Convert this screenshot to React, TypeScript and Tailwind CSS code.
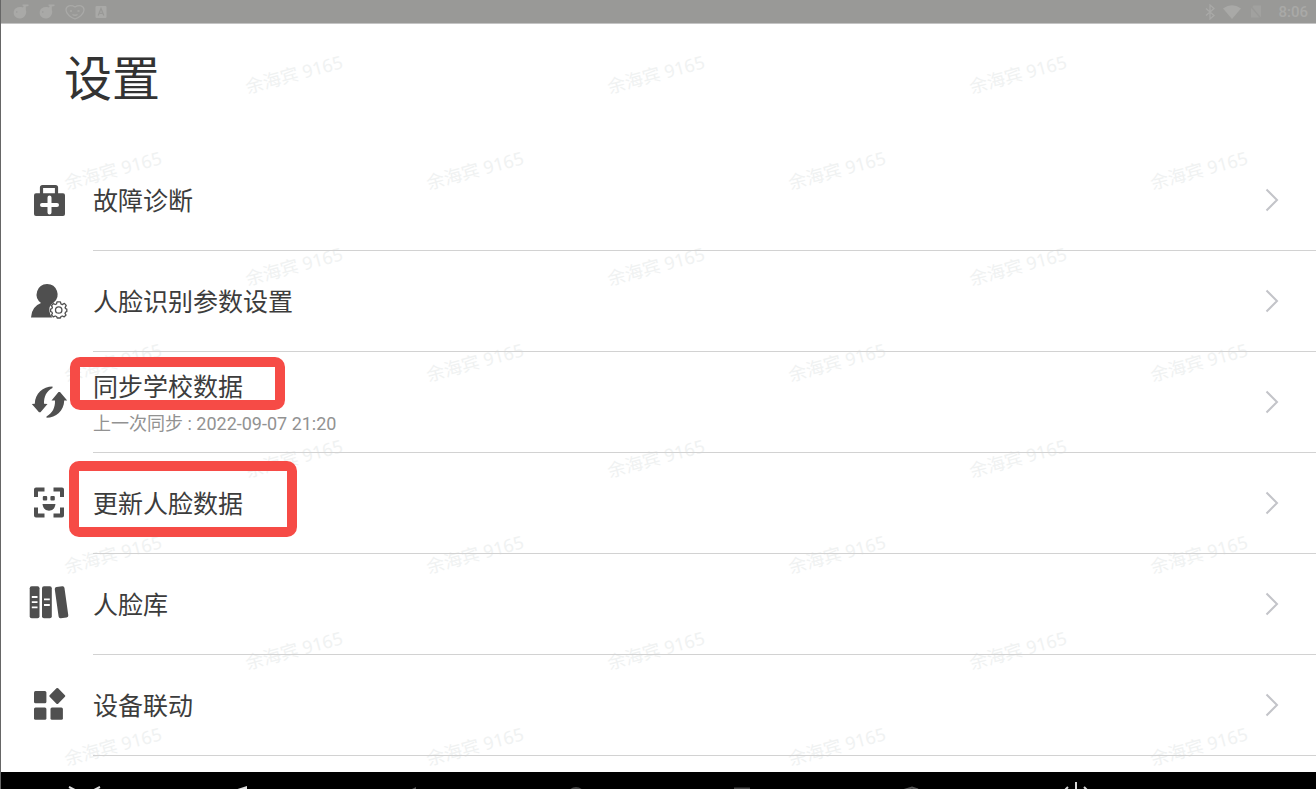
import type { ReactNode } from "react";

type Item = {
    title: string;
    subtitle?: string;
    icon: ReactNode;
    mark?: string;
};

const iconClass = "h-12 w-12 shrink-0 text-[#4f4f4f]";

function DiagnosisIcon() {
    return (
        <svg className={iconClass} viewBox="0 0 48 48" fill="none" aria-hidden="true">
            <path d="M16.5 17V10.5Q16.5 9.5 17.5 9.5H30.5Q31.5 9.5 31.5 10.5V17" stroke="currentColor" strokeWidth="3.2" />
            <rect x="9" y="16.2" width="31" height="22.8" rx="2" fill="currentColor" />
            <path d="M24.5 20.5V35.5M17 28H32" stroke="#fff" strokeWidth="4" strokeLinecap="round" />
        </svg>
    );
}

function FaceParamsIcon() {
    return (
        <svg className={iconClass} viewBox="0 0 48 48" fill="none" aria-hidden="true">
            <path d="M22 6A10.5 10.5 0 0 1 28.5 24.8Q23.5 28 24.5 33.5Q25 37.5 27.5 39.5H6Q6.5 28.5 16 25A10.5 10.5 0 0 1 22 6Z" fill="currentColor" />
            <g stroke="currentColor" strokeWidth="1.3" strokeLinejoin="round" transform="translate(0 -1)">
                <path d="M32 24.9H35.4L36 27L37.3 27.6L39.4 26.3L41.2 28.4L40.1 30.6L40.6 31.6L41.8 32V34.6L40.6 35L40 36.4L41 38L39.2 39.9L37.3 39L36 39.5L35.4 41H32.2L31.6 39.5L30.2 39L28.4 39.9L26.5 38L27.4 36.4L26.9 35L25.6 34.6V32L26.9 31.6L27.4 30.4L26.5 28.6L28.4 26.6L30.2 27.5L31.5 27Z" />
                <circle cx="33.7" cy="33" r="3.2" />
            </g>
        </svg>
    );
}

function SyncIcon() {
    return (
        <svg className={iconClass} viewBox="0 0 48 48" fill="currentColor" aria-hidden="true">
            <path id="sync-arrow" d="M27.5 7.6C18 7.6 10 14.5 9.8 24.8L6.8 25L14 33.3H15.5L22.5 25L19 24.8C18.8 17.5 21.5 12.2 27.5 9Z" />
            <use href="#sync-arrow" transform="rotate(180 24.5 23.2)" />
        </svg>
    );
}

function FaceScanIcon() {
    return (
        <svg className={iconClass} viewBox="0 0 48 48" fill="none" aria-hidden="true">
            <path d="M11 17V9.5H19.5M28.5 9.5H37V17M37 27.5V35.5H28.5M19.5 35.5H11V27.5" stroke="currentColor" strokeWidth="4" strokeLinejoin="round" />
            <rect x="17.8" y="16" width="4.4" height="4.4" rx="1" fill="currentColor" />
            <rect x="25.4" y="16" width="4.4" height="4.4" rx="1" fill="currentColor" />
            <path d="M17.5 24H30.5Q29.5 30.8 24 30.8T17.5 24Z" fill="currentColor" />
        </svg>
    );
}

function LibraryIcon() {
    return (
        <svg className={iconClass} viewBox="0 0 48 48" fill="currentColor" aria-hidden="true">
            <rect x="4.7" y="5.2" width="9.8" height="32" rx="2" />
            <rect x="17" y="5.2" width="9.8" height="32" rx="2" />
            <rect x="31.6" y="5.5" width="9.8" height="31.5" rx="2" transform="rotate(-8 36.5 21)" />
            <path d="M6.8 16H12.5M6.8 21.2H12.5M6.8 26.4H12.5M19 18.4H24.8M19 24H24.8" stroke="#fff" strokeWidth="1.8" />
        </svg>
    );
}

function DevicesIcon() {
    return (
        <svg className={iconClass} viewBox="0 0 48 48" fill="currentColor" aria-hidden="true">
            <rect x="9" y="9" width="12.4" height="12.2" rx="1.5" />
            <rect x="9" y="25.4" width="12.4" height="12.4" rx="1.5" />
            <rect x="25.5" y="25.4" width="12.4" height="12.4" rx="1.5" />
            <rect x="26.3" y="8" width="12" height="12" rx="1.2" transform="rotate(45 32.3 14)" />
        </svg>
    );
}

const items: Item[] = [
    { title: "故障诊断", icon: <DiagnosisIcon /> },
    { title: "人脸识别参数设置", icon: <FaceParamsIcon /> },
    {
        title: "同步学校数据",
        subtitle: "上一次同步 : 2022-09-07 21:20",
        icon: <SyncIcon />,
        mark: "left-[69px] top-[5px] h-[53px] w-[215px]",
    },
    {
        title: "更新人脸数据",
        icon: <FaceScanIcon />,
        mark: "left-[68px] top-2 h-[76px] w-[228px]",
    },
    { title: "人脸库", icon: <LibraryIcon /> },
    { title: "设备联动", icon: <DevicesIcon /> },
];

function StatusBar() {
    return (
        <header className="flex h-6 shrink-0 items-center justify-between border-b border-[#c4c4c4] bg-[#999997] pr-2 pl-3 text-[#a9a9a7]">
            <div className="flex items-center gap-2.5">
                {[0, 1].map((n) => (
                    <svg key={n} className="h-4 w-4" viewBox="0 0 16 16" fill="currentColor" aria-hidden="true">
                        <path d="M9.5 .6H15.5V2L12.8 2.6L12.8 5.5C14.5 10 11 15 6.5 14.5C2.5 14.2 0 11 .8 7.5C1.5 4 5 2.2 9.8 3.4L10.8 2L9.5 1.8Z" />
                        <circle cx="3.8" cy="8" r=".8" fill="#999997" />
                    </svg>
                ))}
                <svg className="h-4 w-5" viewBox="0 0 20 16" fill="none" stroke="currentColor" strokeWidth="1.3" aria-hidden="true">
                    <path d="M10 3C6 .5 1 1.5 1 6C1 10 6 13.5 10 15C14 13.5 19 10 19 6C19 1.5 14 .5 10 3Z" />
                    <path d="M5 7H7M12.5 7H14.5M7.5 10.5Q10 12 12.5 10.5" />
                </svg>
                <svg className="h-4 w-3" viewBox="0 0 12 16" aria-hidden="true">
                    <rect x=".5" y="2" width="11" height="12" rx="1" fill="currentColor" />
                    <path d="M3.2 11.5L6 4.5L8.8 11.5M4.2 9.3H7.8" fill="none" stroke="#999997" strokeWidth="1.3" />
                </svg>
            </div>
            <div className="flex items-center">
                <svg className="h-4 w-3" viewBox="0 0 12 16" fill="none" stroke="currentColor" strokeWidth="1.3" aria-hidden="true">
                    <path d="M2 4.5L10 11.5L6 15V1L10 4.5L2 11.5" />
                </svg>
                <svg className="ml-1.5 h-4 w-5" viewBox="0 0 20 16" fill="currentColor" aria-hidden="true">
                    <path d="M1 4.5Q10 -2 19 4.5L10 15Z" />
                </svg>
                <svg className="ml-2 h-4 w-3" viewBox="0 0 12 16" aria-hidden="true">
                    <path d="M3.5 1.5H11V13.5H1V4.5Z" fill="#a1a19f" />
                    <path d="M1 2.5L11 14.5" stroke="#999997" strokeWidth="1.3" />
                </svg>
                <span className="ml-4 text-[15px] leading-5 font-medium">8:06</span>
            </div>
        </header>
    );
}

function Watermark() {
    return (
        <div className="pointer-events-none absolute inset-0 overflow-hidden pt-0.5" aria-hidden="true">
            {Array.from({ length: 8 }, (_, row) => (
                <div key={row} className={row % 2 === 0 ? "ml-28 flex h-24" : "-ml-[69px] flex h-24"}>
                    {Array.from({ length: row % 2 === 0 ? 3 : 4 }, (_, col) => (
                        <div key={col} className="flex w-[362px] shrink-0 items-center justify-center">
                            <span className="-rotate-[15deg] font-['Noto_Sans','Noto_Sans_CJK_SC',sans-serif] text-lg text-[#f0f2f2]">
                                余海宾 9165
                            </span>
                        </div>
                    ))}
                </div>
            ))}
        </div>
    );
}

function SettingRow({ item }: { item: Item }) {
    return (
        <li className="relative">
            <button type="button" className="flex h-[101px] w-full items-stretch pl-6 text-left">
                <span className="mr-5 flex items-center">{item.icon}</span>
                <span className="flex flex-1 items-center justify-between border-b border-[#d2d2d2] pr-[37px]">
                    <span className="flex flex-col pt-1">
                        <span className="text-[25px] leading-10 text-[#3c3c3c]">{item.title}</span>
                        {item.subtitle && <span className="text-lg leading-8 text-[#929292]">{item.subtitle}</span>}
                    </span>
                    <svg className="h-6 w-[14px]" viewBox="0 0 14 24" fill="none" stroke="#c3c4c9" strokeWidth="2" aria-hidden="true">
                        <path d="M1.5 1.5L12 12L1.5 22.5" />
                    </svg>
                </span>
            </button>
            {item.mark && (
                <span className={`pointer-events-none absolute rounded-[10px] border-10 border-[#f64b46] ${item.mark}`} />
            )}
        </li>
    );
}

function NavBar() {
    return (
        <footer className="h-[17px] shrink-0 overflow-hidden bg-black">
            <svg className="h-[17px] w-full" viewBox="1 0 1315 17" preserveAspectRatio="xMinYMin slice" fill="none" aria-hidden="true">
                <path d="M69 15L76 18.5M100 15L93 18.5" stroke="#e0e0e0" strokeWidth="2" />
                <path d="M236 17.5L247 14V17.5Z" fill="#e0e0e0" />
                <path d="M412 17L416 15V17Z" fill="#555" />
                <circle cx="576" cy="24" r="8" stroke="#444" strokeWidth="2" />
                <path d="M734 16.5H750" stroke="#444" strokeWidth="2" />
                <path d="M904 18L912 15.5L918 17.5" stroke="#555" strokeWidth="2" />
                <path d="M1076 10V17M1068 15L1065 18M1084 15L1087 18" stroke="#d8d8d8" strokeWidth="2" />
            </svg>
        </footer>
    );
}

export default function App() {
    return (
        <div className="flex h-screen flex-col overflow-hidden border-l border-[#666] bg-white font-[Roboto,'Noto_Sans_CJK_SC',sans-serif]">
            <StatusBar />
            <main className="relative min-h-0 flex-1 overflow-hidden">
                <Watermark />
                <div className="relative">
                    <h1 className="h-[126px] pt-[22px] pl-[63px] text-5xl leading-[68px] text-[#333]">设置</h1>
                    <ul>
                        {items.map((item) => (
                            <SettingRow key={item.title} item={item} />
                        ))}
                    </ul>
                </div>
            </main>
            <NavBar />
        </div>
    );
}
